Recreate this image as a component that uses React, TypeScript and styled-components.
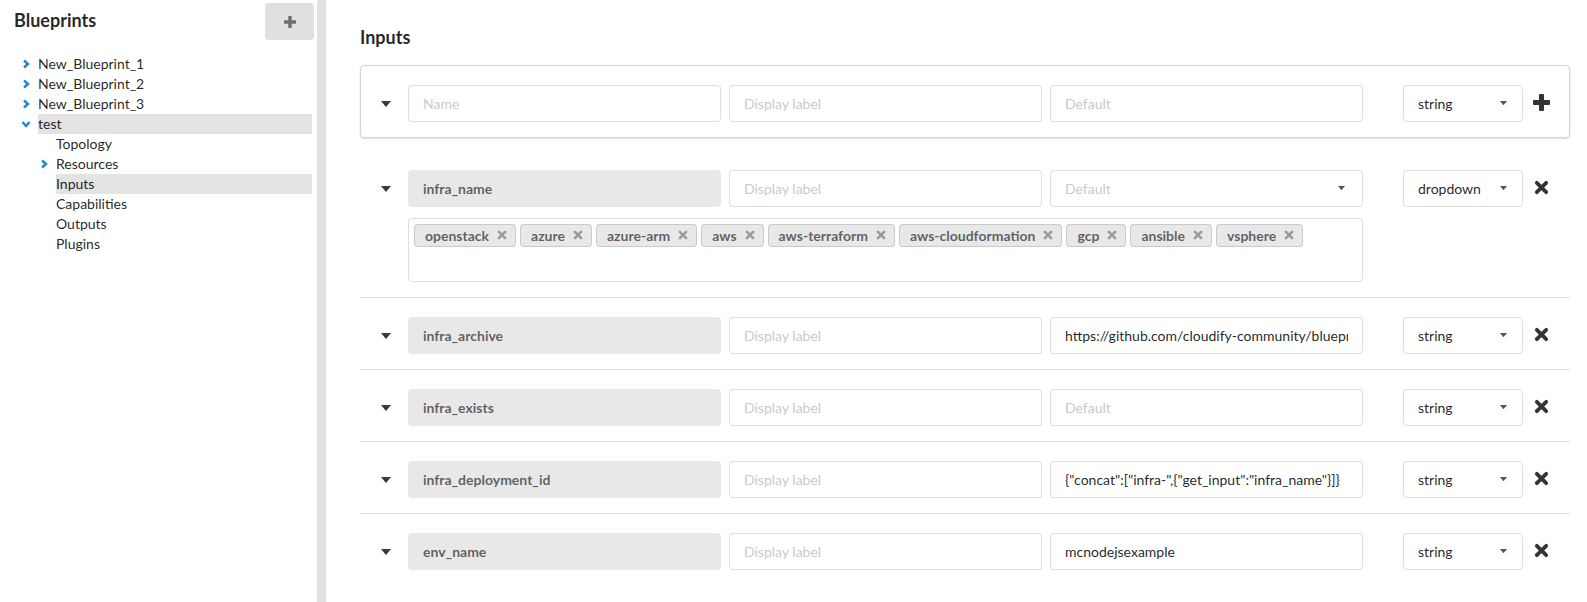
import React from "react";
import styled, { createGlobalStyle } from "styled-components";

const GlobalStyle = createGlobalStyle`
  body {
    margin: 0;
    font-family: Lato, "Helvetica Neue", Arial, sans-serif;
    font-size: 14px;
    color: rgba(0, 0, 0, 0.87);
    background: #fff;
  }
  * { box-sizing: border-box; }
`;

interface TreeNode {
  label: string;
  level: 1 | 2;
  chevron?: "right" | "down";
  active?: boolean;
}

const tree: TreeNode[] = [
  { label: "New_Blueprint_1", level: 1, chevron: "right" },
  { label: "New_Blueprint_2", level: 1, chevron: "right" },
  { label: "New_Blueprint_3", level: 1, chevron: "right" },
  { label: "test", level: 1, chevron: "down", active: true },
  { label: "Topology", level: 2 },
  { label: "Resources", level: 2, chevron: "right" },
  { label: "Inputs", level: 2, active: true },
  { label: "Capabilities", level: 2 },
  { label: "Outputs", level: 2 },
  { label: "Plugins", level: 2 },
];

interface InputRow {
  name: string;
  value?: string;
  type: string;
  options?: string[];
}

const rows: InputRow[] = [
  {
    name: "infra_name",
    type: "dropdown",
    options: [
      "openstack",
      "azure",
      "azure-arm",
      "aws",
      "aws-terraform",
      "aws-cloudformation",
      "gcp",
      "ansible",
      "vsphere",
    ],
  },
  {
    name: "infra_archive",
    value: "https://github.com/cloudify-community/blueprint-examples/releases/download/latest/infrastructure.zip",
    type: "string",
  },
  { name: "infra_exists", type: "string" },
  {
    name: "infra_deployment_id",
    value: '{"concat":["infra-",{"get_input":"infra_name"}]}',
    type: "string",
  },
  { name: "env_name", value: "mcnodejsexample", type: "string" },
];

const Chevron = ({ dir }: { dir: "right" | "down" }) => (
  <svg width="10" height="10" viewBox="0 0 10 10">
    {dir === "right" ? (
      <polyline points="3,1.5 7,5 3,8.5" fill="none" stroke="#2185d0" strokeWidth="2.4" />
    ) : (
      <polyline points="1.5,3 5,7 8.5,3" fill="none" stroke="#2185d0" strokeWidth="2.4" />
    )}
  </svg>
);

const Caret = ({ size = 10, color = "#3a3a3a" }: { size?: number; color?: string }) => (
  <svg width={size} height={size * 0.6} viewBox="0 0 10 6">
    <polygon points="0,0 10,0 5,6" fill={color} />
  </svg>
);

const PlusIcon = ({ size = 17, color = "#333" }: { size?: number; color?: string }) => (
  <svg width={size} height={size} viewBox="0 0 17 17">
    <rect x="6" y="0" width="5" height="17" rx="1" fill={color} />
    <rect x="0" y="6" width="17" height="5" rx="1" fill={color} />
  </svg>
);

const CrossIcon = ({ size = 15, color = "#333", weight = 4 }: { size?: number; color?: string; weight?: number }) => (
  <svg width={size} height={size} viewBox="0 0 16 16">
    <line x1="3" y1="3" x2="13" y2="13" stroke={color} strokeWidth={weight} strokeLinecap="round" />
    <line x1="13" y1="3" x2="3" y2="13" stroke={color} strokeWidth={weight} strokeLinecap="round" />
  </svg>
);

export default function App() {
  return (
    <>
      <GlobalStyle />
      <Page>
        <Sidebar>
          <SidebarHeader>
            <SidebarTitle>Blueprints</SidebarTitle>
            <AddButton>
              <PlusIcon size={12} color="#6e6e6e" />
            </AddButton>
          </SidebarHeader>
          <Tree>
            {tree.map((node) => (
              <TreeItem key={node.label} $level={node.level}>
                <ChevronBox>{node.chevron && <Chevron dir={node.chevron} />}</ChevronBox>
                <TreeLabel $active={node.active}>{node.label}</TreeLabel>
              </TreeItem>
            ))}
          </Tree>
        </Sidebar>
        <Splitter />
        <Main>
          <Heading>Inputs</Heading>
          <NewCard>
            <FieldRow>
              <CaretCell $width={47}>
                <Caret />
              </CaretCell>
              <Fields>
                <TextField placeholder="Name" />
                <TextField placeholder="Display label" />
                <TextField placeholder="Default" />
              </Fields>
              <TypeSelect>
                <span>string</span>
                <Caret size={7} color="#555" />
              </TypeSelect>
              <ActionCell>
                <PlusIcon />
              </ActionCell>
            </FieldRow>
          </NewCard>
          {rows.map((row, i) => (
            <Entry key={row.name} $last={i === rows.length - 1}>
              <FieldRow>
                <CaretCell $width={48}>
                  <Caret />
                </CaretCell>
                <Fields>
                  <NameField readOnly value={row.name} />
                  <TextField placeholder="Display label" />
                  {row.options ? (
                    <DefaultSelect>
                      <Placeholder>Default</Placeholder>
                      <Caret size={7} color="#555" />
                    </DefaultSelect>
                  ) : (
                    <TextField placeholder="Default" defaultValue={row.value} />
                  )}
                </Fields>
                <TypeSelect>
                  <span>{row.type}</span>
                  <Caret size={7} color="#555" />
                </TypeSelect>
                <ActionCell>
                  <CrossIcon />
                </ActionCell>
              </FieldRow>
              {row.options && (
                <OptionsBox>
                  {row.options.map((o) => (
                    <Tag key={o}>
                      {o}
                      <CrossIcon size={10} color="#9a9a9a" weight={4} />
                    </Tag>
                  ))}
                </OptionsBox>
              )}
            </Entry>
          ))}
        </Main>
      </Page>
    </>
  );
}

const Page = styled.div`
  display: flex;
  height: 100vh;
  overflow: hidden;
`;

const Sidebar = styled.aside`
  width: 317px;
  flex-shrink: 0;
  padding: 3px 3px 0 0;
`;

const SidebarHeader = styled.div`
  display: flex;
  align-items: center;
  justify-content: space-between;
  padding-left: 14px;
  height: 37px;
`;

const SidebarTitle = styled.h2`
  margin: 0;
  font-size: 18px;
  font-weight: 700;
  color: rgba(0, 0, 0, 0.87);
  line-height: 22px;
  padding-bottom: 3px;
`;

const AddButton = styled.button`
  width: 49px;
  height: 37px;
  border: none;
  border-radius: 4px;
  background: #e0e0e0;
  display: flex;
  align-items: center;
  justify-content: center;
  padding: 0;
`;

const Tree = styled.ul`
  list-style: none;
  margin: 14px 2px 0 0;
  padding: 0;
`;

const TreeItem = styled.li<{ $level: 1 | 2 }>`
  display: flex;
  align-items: center;
  height: 20px;
  padding-left: ${(p) => (p.$level === 1 ? 21 : 39)}px;
`;

const ChevronBox = styled.span`
  width: 17px;
  display: flex;
  justify-content: flex-start;
  align-items: center;
`;

const TreeLabel = styled.span<{ $active?: boolean }>`
  flex: 1;
  height: 20px;
  line-height: 20px;
  font-size: 14px;
  color: rgba(0, 0, 0, 0.87);
  background: ${(p) => (p.$active ? "#e3e3e3" : "transparent")};
`;

const Splitter = styled.div`
  width: 9px;
  flex-shrink: 0;
  background: #e2e2e2;
`;

const Main = styled.main`
  flex: 1;
  padding: 26px 17px 0 34px;
`;

const Heading = styled.h3`
  margin: 0 0 17px;
  font-size: 18px;
  line-height: 22px;
  font-weight: 700;
  color: rgba(0, 0, 0, 0.87);
`;

const NewCard = styled.div`
  border: 1px solid #d4d4d5;
  border-radius: 4px;
  box-shadow: 0 1px 2px 0 rgba(34, 36, 38, 0.15);
  padding: 19px 0 15px;
  margin-bottom: 13px;
`;

const Entry = styled.div<{ $last?: boolean }>`
  padding: 19px 0 15px;
  border-bottom: ${(p) => (p.$last ? "none" : "1px solid #e0e0e0")};
`;

const FieldRow = styled.div`
  display: flex;
  align-items: center;
`;

const CaretCell = styled.div<{ $width: number }>`
  width: ${(p) => p.$width}px;
  padding-left: ${(p) => p.$width - 27}px;
  display: flex;
  align-items: center;
`;

const Fields = styled.div`
  display: flex;
  gap: 8px;
`;

const baseField = `
  height: 37px;
  border-radius: 4px;
  font-family: Lato, "Helvetica Neue", Arial, sans-serif;
  font-size: 14px;
  padding: 0 14px;
  outline: none;
`;

const TextField = styled.input`
  ${baseField}
  width: 313px;
  border: 1px solid rgba(34, 36, 38, 0.15);
  color: rgba(0, 0, 0, 0.87);
  background: #fff;
  &::placeholder {
    color: rgba(191, 191, 191, 0.87);
  }
`;

const NameField = styled.input`
  ${baseField}
  width: 313px;
  border: 1px solid transparent;
  background: #e8e8e8;
  color: rgba(0, 0, 0, 0.6);
  font-weight: 700;
`;

const DefaultSelect = styled.div`
  ${baseField}
  width: 313px;
  border: 1px solid rgba(34, 36, 38, 0.15);
  display: flex;
  align-items: center;
  justify-content: space-between;
  padding-right: 17px;
`;

const Placeholder = styled.span`
  color: rgba(191, 191, 191, 0.87);
`;

const TypeSelect = styled.div`
  ${baseField}
  width: 120px;
  margin-left: 40px;
  border: 1px solid rgba(34, 36, 38, 0.15);
  display: flex;
  align-items: center;
  justify-content: space-between;
  padding-right: 15px;
  color: rgba(0, 0, 0, 0.87);
`;

const ActionCell = styled.div`
  margin-left: 10px;
  width: 17px;
  display: flex;
  justify-content: center;
  align-items: center;
  margin-top: -3px;
`;

const OptionsBox = styled.div`
  margin: 11px 0 0 48px;
  width: 955px;
  height: 64px;
  border: 1px solid rgba(34, 36, 38, 0.15);
  border-radius: 4px;
  padding: 5px;
  display: flex;
  flex-wrap: wrap;
  align-content: flex-start;
  gap: 4px;
`;

const Tag = styled.span`
  display: inline-flex;
  align-items: center;
  gap: 8px;
  height: 23px;
  padding: 0 9px 1px 11px;
  background: #e8e8e8;
  border-radius: 4px;
  box-shadow: inset 0 0 0 1px rgba(34, 36, 38, 0.15);
  font-weight: 700;
  font-size: 14px;
  color: rgba(0, 0, 0, 0.6);
`;
